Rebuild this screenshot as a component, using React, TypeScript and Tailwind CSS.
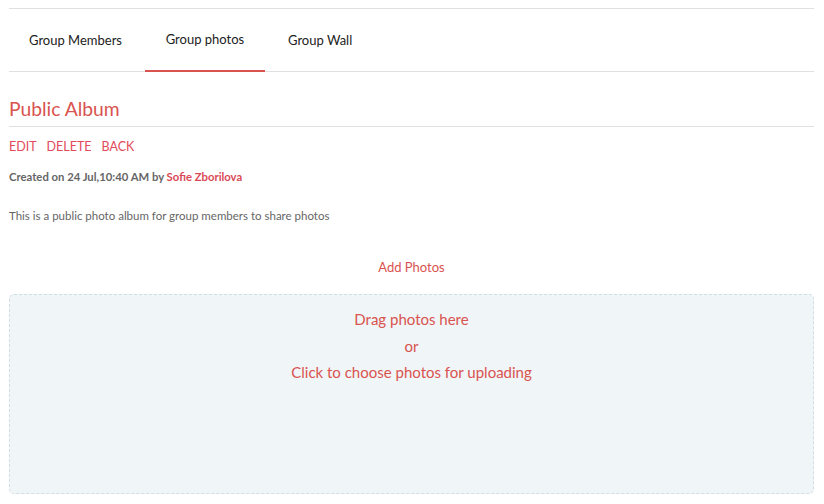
import React from "react";

export default function App() {
  const font = { fontFamily: "Lato, 'Noto Sans', sans-serif" };
  return (
    <div className="w-[824px] h-[504px] bg-white overflow-hidden" style={font}>
      <div className="pt-2 px-[9px] pr-[10px]">
        <div className="border-t border-b border-[#e0e0e0] h-[64px] flex items-stretch">
          <div className="px-5 flex items-center text-[13px] text-[#222] pt-px">Group Members</div>
          <div className="ml-[3px] w-[120px] flex items-center justify-center text-[13px] text-[#222] border-b-2 border-[#d9534f] -mb-px">Group photos</div>
          <div className="ml-[3px] px-5 flex items-center text-[13px] text-[#222] pt-px">Group Wall</div>
        </div>
        <div className="mt-[25px] pb-[5px] border-b border-[#e0e0e0] text-[19.3px] leading-[24px] text-[#d9534f]">Public Album</div>
        <div className="mt-[12px] flex gap-[10px] text-[12.5px] leading-[16px] text-[#e24a5a] uppercase">
          <span>Edit</span>
          <span>Delete</span>
          <span>Back</span>
        </div>
        <div className="mt-[15px] text-[11.3px] leading-[14px] font-bold text-[#666]">
          Created on 24 Jul,10:40 AM by <span className="text-[#d94a57]">Sofie Zborilova</span>
        </div>
        <div className="mt-[25px] text-[11.5px] leading-[14px] text-[#666]">
          This is a public photo album for group members to share photos
        </div>
        <div className="mt-[36px] text-center text-[13px] leading-[16px] text-[#d9534f]">Add Photos</div>
        <div className="mt-[19px] h-[200px] rounded-[5px] border border-dashed border-[#d3dde5] bg-[#f0f5f8] flex flex-col items-center pt-[11px] text-[15px] leading-[26.5px] text-[#d9534f]">
          <div>Drag photos here</div>
          <div>or</div>
          <div>Click to choose photos for uploading</div>
        </div>
      </div>
    </div>
  );
}
